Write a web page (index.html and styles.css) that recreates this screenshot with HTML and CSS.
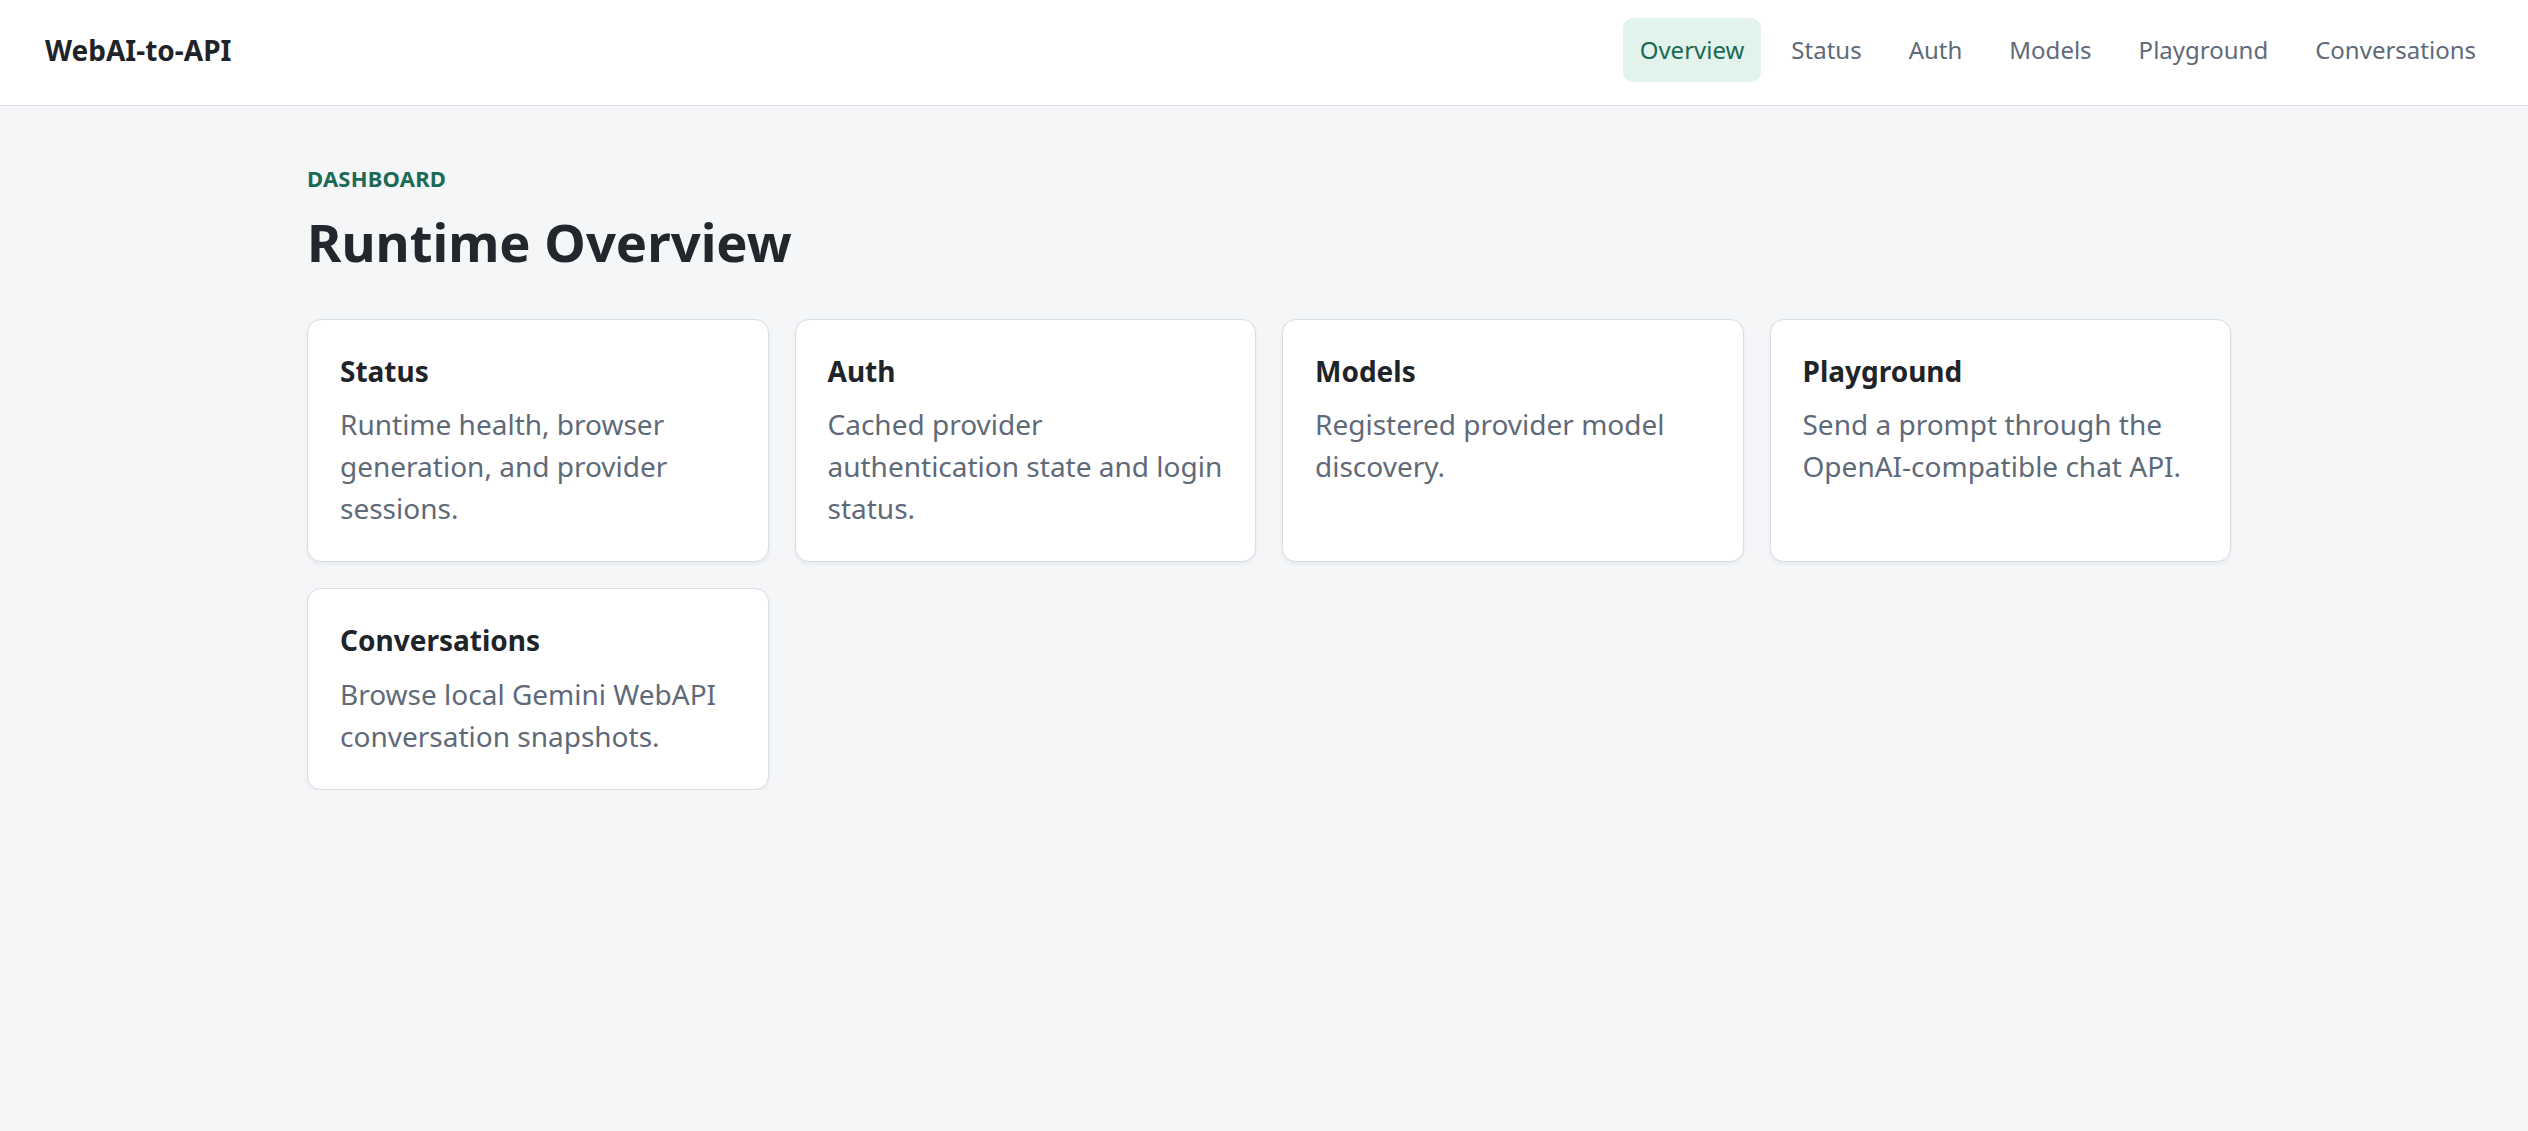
FILE: index.html
```html
<!DOCTYPE html>
<html lang="en">

<head>
   <meta charset="UTF-8">
   <meta name="viewport" content="width=device-width, initial-scale=1.0">
   <title>WebAI-to-API</title>
   <link rel="stylesheet" href="styles.css">
</head>

<body>
   <header class="topbar">
      <div class="brand">WebAI-to-API</div>
      <nav class="nav">
         <a href="#" class="nav-link active">Overview</a>
         <a href="#" class="nav-link">Status</a>
         <a href="#" class="nav-link">Auth</a>
         <a href="#" class="nav-link">Models</a>
         <a href="#" class="nav-link">Playground</a>
         <a href="#" class="nav-link">Conversations</a>
      </nav>
   </header>

   <main class="page">
      <p class="eyebrow">DASHBOARD</p>
      <h1 class="page-title">Runtime Overview</h1>

      <div class="cards">
         <a href="#" class="card">
            <h2>Status</h2>
            <p>Runtime health, browser generation, and provider sessions.</p>
         </a>
         <a href="#" class="card">
            <h2>Auth</h2>
            <p>Cached provider authentication state and login status.</p>
         </a>
         <a href="#" class="card">
            <h2>Models</h2>
            <p>Registered provider model discovery.</p>
         </a>
         <a href="#" class="card">
            <h2>Playground</h2>
            <p>Send a prompt through the OpenAI-compatible chat API.</p>
         </a>
         <a href="#" class="card">
            <h2>Conversations</h2>
            <p>Browse local Gemini WebAPI conversation snapshots.</p>
         </a>
      </div>
   </main>
</body>
</html>
```

FILE: styles.css
```css
body {
   font-family: "Noto Sans", "Open Sans", sans-serif;
   background-color: #f5f6f8;
   margin: 0;
   padding: 0;
   color: #22272e;
}

/* Top bar */

.topbar {
   display: flex;
   align-items: center;
   justify-content: space-between;
   padding: 18px 35px 23px 45px;
   background-color: #fff;
   border-bottom: 1px solid #dcdde6;
}

.brand {
   font-size: 28px;
   font-weight: 700;
   color: #1f2429;
}

.nav {
   display: flex;
   gap: 13px;
}

.nav-link {
   padding: 14px 17px;
   font-size: 24px;
   line-height: 1.5;
   color: #5f6a79;
   text-decoration: none;
   border-radius: 10px;
}

.nav-link.active {
   background-color: #e2f3ec;
   color: #1b6a55;
}

/* Main content */

.page {
   max-width: 1934px;
   box-sizing: border-box;
   margin: 0 auto;
   padding: 56px 0 0 10px;
}

.eyebrow {
   margin: 0 0 15px;
   font-size: 22px;
   line-height: 1.5;
   font-weight: 700;
   letter-spacing: 0.01em;
   color: #1b6a55;
}

.page-title {
   margin: 0 0 46px;
   font-size: 52.5px;
   line-height: 1.2;
   font-weight: 700;
   color: #22272d;
}

.cards {
   display: grid;
   grid-template-columns: repeat(4, 1fr);
   gap: 26px;
}

.card {
   display: block;
   padding: 32px;
   background-color: #fff;
   border: 1px solid #d9dde4;
   border-radius: 14px;
   box-shadow: 0 2px 4px rgba(20, 30, 50, 0.06);
   text-decoration: none;
}

.card h2 {
   margin: 0 0 13px;
   font-size: 28px;
   line-height: 1.37;
   font-weight: 700;
   color: #1f2429;
}

.card p {
   margin: 0;
   font-size: 28px;
   line-height: 1.5;
   color: #5f6a79;
}
```
